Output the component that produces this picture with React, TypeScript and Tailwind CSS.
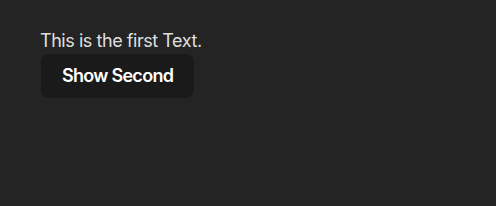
export default function App() {
  return (
    <div className="min-h-screen bg-[#242424] px-10 pt-[29px] font-['Inter',sans-serif] text-[rgba(255,255,255,0.87)] antialiased">
      <p className="text-[18px] leading-6 tracking-[-0.025em]">This is the first Text.</p>
      <button
        type="button"
        className="ml-[1px] mt-[1px] rounded-lg border border-transparent bg-[#1a1a1a] px-5 py-[9px] text-[18px] font-semibold leading-6 tracking-[-0.04em] text-white"
      >
        Show Second
      </button>
    </div>
  );
}
